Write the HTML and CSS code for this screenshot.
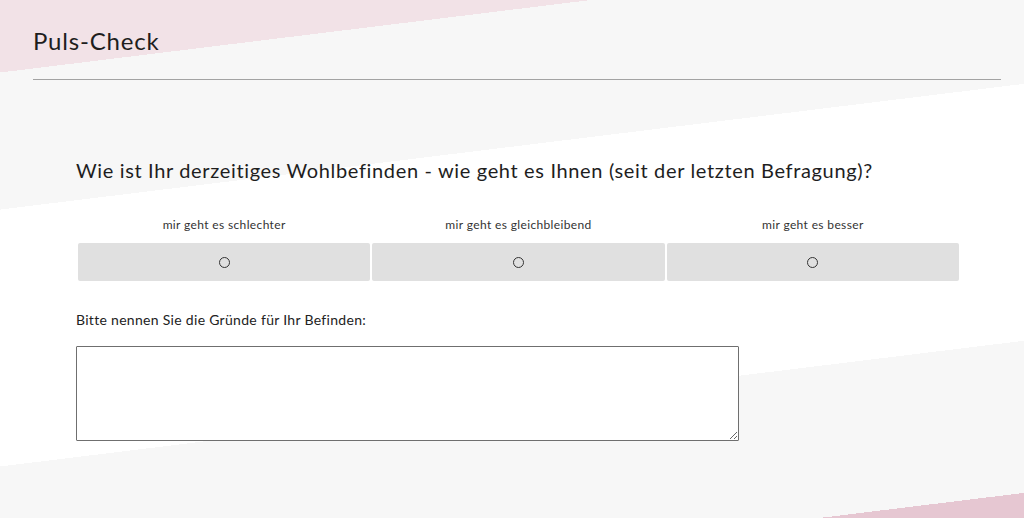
FILE: index.html
```html
<!DOCTYPE html>
<html lang="de">
<head>
    <meta charset="UTF-8">
    <meta name="viewport" content="width=device-width, initial-scale=1.0">
    <title>Puls-Check</title>
    <link rel="stylesheet" href="styles.css">
</head>
<body>
    <div class="page">
        <header class="page-header">
            <h1>Puls-Check</h1>
        </header>

        <form class="survey">
            <h2 class="question">Wie ist Ihr derzeitiges Wohlbefinden - wie geht es Ihnen (seit der letzten Befragung)?</h2>

            <div class="scale">
                <label class="scale-item">
                    <span class="scale-label">mir geht es schlechter</span>
                    <span class="scale-box"><input type="radio" name="mood" value="worse"></span>
                </label>
                <label class="scale-item">
                    <span class="scale-label">mir geht es gleichbleibend</span>
                    <span class="scale-box"><input type="radio" name="mood" value="same"></span>
                </label>
                <label class="scale-item">
                    <span class="scale-label">mir geht es besser</span>
                    <span class="scale-box"><input type="radio" name="mood" value="better"></span>
                </label>
            </div>

            <div class="reasons">
                <label for="reasons">Bitte nennen Sie die Gründe für Ihr Befinden:</label>
                <textarea id="reasons" name="reasons"></textarea>
            </div>
        </form>
    </div>
</body>
</html>
```

FILE: styles.css
```css
html, body {
    margin: 0;
    padding: 0;
}

body {
    font-family: Lato, "Open Sans", Arial, sans-serif;
    color: #222;
}

.page {
    min-height: 100vh;
    background: linear-gradient(173deg,
        #f2e2e7 0 72px,
        #f7f7f7 72px 208px,
        #ffffff 208px 463px,
        #f7f7f7 463px 614px,
        #e6c7d2 614px);
}

.page-header {
    margin: 0 23px 0 33px;
    padding-top: 26px;
    padding-bottom: 23px;
    border-bottom: 1px solid #a3a3a3;
}

.page-header h1 {
    margin: 0;
    font-size: 24px;
    font-weight: normal;
    line-height: 30px;
    letter-spacing: 0.8px;
    color: #1e1e1e;
}

.survey {
    margin-left: 76px;
    width: 884px;
    padding-top: 78px;
}

.question {
    margin: 0 0 35px;
    font-size: 20px;
    font-weight: normal;
    line-height: 24px;
    letter-spacing: 0.65px;
    color: #1e1e1e;
}

.scale {
    display: grid;
    grid-template-columns: repeat(3, 1fr);
    gap: 2px;
    margin-left: 2px;
    width: 881px;
}

.scale-item {
    display: flex;
    flex-direction: column;
    align-items: stretch;
    cursor: pointer;
}

.scale-label {
    text-align: center;
    font-size: 12px;
    line-height: 15px;
    letter-spacing: 0.36px;
    color: #333;
    margin-bottom: 11px;
}

.scale-box {
    display: flex;
    align-items: center;
    justify-content: center;
    height: 38px;
    background: #e0e0e0;
    border-radius: 2px;
}

.scale-box input {
    appearance: none;
    -webkit-appearance: none;
    width: 11px;
    height: 11px;
    margin: 0;
    border: 1px solid #333;
    border-radius: 50%;
    background: transparent;
}

.scale-box input:checked {
    background: radial-gradient(circle, #333 0 2.5px, transparent 3px);
}

.reasons {
    margin-top: 30px;
}

.reasons label {
    display: block;
    font-size: 14px;
    line-height: 17px;
    letter-spacing: 0.3px;
    color: #222;
    margin-bottom: 18px;
}

.reasons textarea {
    display: block;
    box-sizing: border-box;
    width: 663px;
    height: 95px;
    margin: 0;
    border: 1px solid #6f6f6f;
    border-radius: 1px;
    background: #fff;
    font-family: Lato, Arial, sans-serif;
    font-size: 14px;
}
```
